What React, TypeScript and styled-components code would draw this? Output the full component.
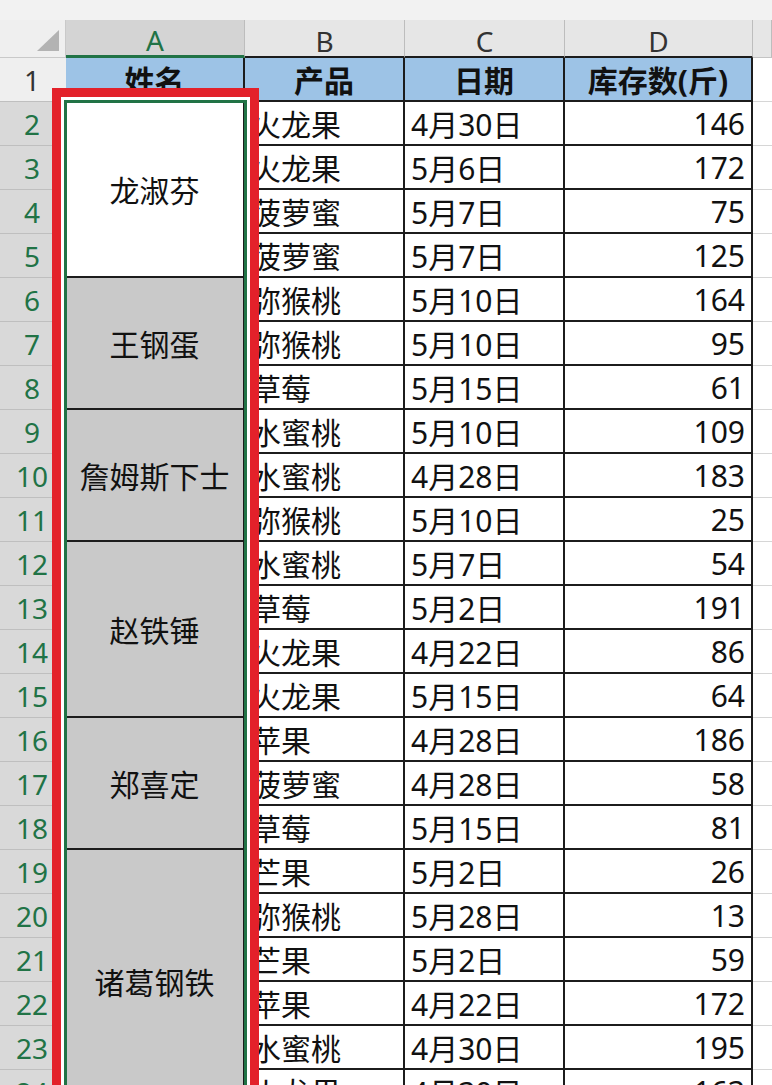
import React from "react";
import styled, { createGlobalStyle } from "styled-components";

const GlobalStyle = createGlobalStyle`
  html, body { margin: 0; padding: 0; background: #ffffff; overflow: hidden; }
  * { box-sizing: border-box; }
`;

const GREEN = "#217346";
const LINE = "#1c1c1c";
const FONT = `"Noto Sans", "Noto Sans CJK SC", sans-serif`;

const Sheet = styled.div`
  position: relative;
  width: 772px;
  height: 1085px;
  overflow: hidden;
  background: #f2f2f2;
  font-family: ${FONT};
`;

const TopBand = styled.div`
  height: 20px;
  background: #f2f2f2;
`;

const Grid = styled.div`
  display: grid;
  grid-template-columns: 66px 179px 160px 160px 188px 19px;
  grid-template-rows: 38px;
  grid-auto-rows: 44px;
`;

const Corner = styled.div`
  grid-column: 1;
  background: #efefef;
  border-bottom: 1px solid #c9c9c9;
  border-right: 1px solid #c9c9c9;
  display: flex;
  align-items: flex-end;
  justify-content: flex-end;
  padding: 0 6px 6px 0;
`;

const ColHead = styled.div<{ $selected?: boolean; $edge?: boolean }>`
  background: ${(p) => (p.$selected ? "#d4d4d4" : "#e6e6e6")};
  color: ${(p) => (p.$selected ? GREEN : "#333333")};
  border-right: 1px solid #bdbdbd;
  border-bottom: ${(p) =>
    p.$selected ? `3px solid ${GREEN}` : p.$edge ? "1px solid #c4c4c4" : `2px solid ${LINE}`};
  font-size: 28px;
  display: flex;
  align-items: center;
  justify-content: center;
  padding-top: 5px;
`;

const RowHead = styled.div<{ $selected?: boolean }>`
  grid-column: 1;
  background: ${(p) => (p.$selected ? "#d9d9d9" : "#efefef")};
  color: ${(p) => (p.$selected ? GREEN : "#333333")};
  border-bottom: 1px solid #bfbfbf;
  font-size: 28px;
  display: flex;
  align-items: center;
  justify-content: center;
  padding-right: 2px;
`;

const TitleCell = styled.div`
  background: #9dc3e6;
  color: #111111;
  font-weight: 700;
  font-size: 30px;
  border-right: 2px solid ${LINE};
  border-bottom: 2px solid ${LINE};
  display: flex;
  align-items: center;
  justify-content: center;
  white-space: nowrap;
`;

const NameCell = styled.div<{ $span: number; $active?: boolean }>`
  grid-column: 2;
  grid-row: span ${(p) => p.$span};
  background: ${(p) => (p.$active ? "#ffffff" : "#c9c9c9")};
  color: #111111;
  font-size: 30px;
  border-right: 2px solid ${LINE};
  border-bottom: 2px solid ${LINE};
  display: flex;
  align-items: center;
  justify-content: center;
  white-space: nowrap;
`;

const DataCell = styled.div<{ $col: number; $right?: boolean }>`
  grid-column: ${(p) => p.$col};
  background: #ffffff;
  color: #111111;
  font-size: 30px;
  border-right: 2px solid ${LINE};
  border-bottom: 2px solid ${LINE};
  display: flex;
  align-items: center;
  justify-content: ${(p) => (p.$right ? "flex-end" : "flex-start")};
  padding: ${(p) => (p.$right ? "0 6px 0 0" : "0 0 0 6px")};
  white-space: nowrap;
  overflow: hidden;
`;

const EdgeCell = styled.div`
  grid-column: 6;
  background: #ffffff;
  border-bottom: 1px solid #d6d6d6;
`;

const Selection = styled.div`
  position: absolute;
  left: 64px;
  top: 100px;
  width: 183px;
  height: 1100px;
  border: 3px solid ${GREEN};
  pointer-events: none;
`;

const Highlight = styled.div`
  position: absolute;
  left: 52px;
  top: 88px;
  width: 207px;
  height: 1120px;
  border: 9px solid #e3212a;
  box-shadow: inset 0 0 0 3px #ffffff;
  pointer-events: none;
`;

type Row = [string, string, number];

const rows: Row[] = [
  ["火龙果", "4月30日", 146],
  ["火龙果", "5月6日", 172],
  ["菠萝蜜", "5月7日", 75],
  ["菠萝蜜", "5月7日", 125],
  ["弥猴桃", "5月10日", 164],
  ["弥猴桃", "5月10日", 95],
  ["草莓", "5月15日", 61],
  ["水蜜桃", "5月10日", 109],
  ["水蜜桃", "4月28日", 183],
  ["弥猴桃", "5月10日", 25],
  ["水蜜桃", "5月7日", 54],
  ["草莓", "5月2日", 191],
  ["火龙果", "4月22日", 86],
  ["火龙果", "5月15日", 64],
  ["苹果", "4月28日", 186],
  ["菠萝蜜", "4月28日", 58],
  ["草莓", "5月15日", 81],
  ["芒果", "5月2日", 26],
  ["弥猴桃", "5月28日", 13],
  ["芒果", "5月2日", 59],
  ["苹果", "4月22日", 172],
  ["水蜜桃", "4月30日", 195],
  ["火龙果", "4月30日", 163],
];

// name groups keyed by starting row index (0 = sheet row 2)
const groups: Record<number, { name: string; span: number; active?: boolean }> = {
  0: { name: "龙淑芬", span: 4, active: true },
  4: { name: "王钢蛋", span: 3 },
  7: { name: "詹姆斯下士", span: 3 },
  10: { name: "赵铁锤", span: 4 },
  14: { name: "郑喜定", span: 3 },
  17: { name: "诸葛钢铁", span: 6 },
};

export default function App() {
  return (
    <>
      <GlobalStyle />
      <Sheet>
        <TopBand />
        <Grid>
          <Corner>
            <svg width="22" height="21" viewBox="0 0 22 21">
              <polygon points="22,0 22,21 0,21" fill="#b3b3b3" />
            </svg>
          </Corner>
          <ColHead $selected>A</ColHead>
          <ColHead>B</ColHead>
          <ColHead>C</ColHead>
          <ColHead>D</ColHead>
          <ColHead $edge />

          <RowHead>1</RowHead>
          <TitleCell>姓名</TitleCell>
          <TitleCell>产品</TitleCell>
          <TitleCell>日期</TitleCell>
          <TitleCell>库存数(斤)</TitleCell>
          <EdgeCell />

          {rows.map(([product, date, qty], i) => {
            const g = groups[i];
            return (
              <React.Fragment key={i}>
                <RowHead $selected>{i + 2}</RowHead>
                {g && (
                  <NameCell $span={g.span} $active={g.active}>
                    {g.name}
                  </NameCell>
                )}
                <DataCell $col={3}>{product}</DataCell>
                <DataCell $col={4}>{date}</DataCell>
                <DataCell $col={5} $right>
                  {qty}
                </DataCell>
                <EdgeCell />
              </React.Fragment>
            );
          })}
        </Grid>
        <Selection />
        <Highlight />
      </Sheet>
    </>
  );
}
